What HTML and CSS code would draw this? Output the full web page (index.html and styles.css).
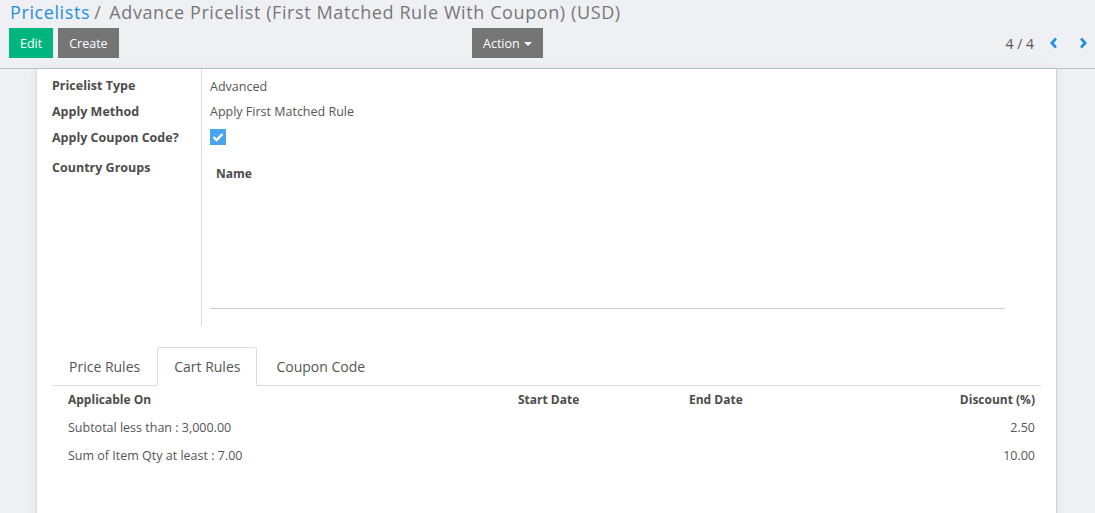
FILE: index.html
```html
<!DOCTYPE html>
<html>
<head>
<meta charset="utf-8">
<link rel="stylesheet" href="styles.css">
</head>
<body>
<div class="cp">
  <div class="crumbs"><a class="crumb-link">Pricelists</a><span class="sep">/</span><span class="crumb-title">Advance Pricelist (First Matched Rule With Coupon) (USD)</span></div>
  <div class="cp-bar">
    <div class="cp-left">
      <button class="btn btn-primary">Edit</button>
      <button class="btn btn-secondary">Create</button>
    </div>
    <div class="cp-mid">
      <button class="btn btn-secondary btn-action">Action <span class="caret"></span></button>
    </div>
    <div class="pager">
      <span class="pager-value">4 / 4</span>
      <span class="pager-btn"><svg width="10" height="12" viewBox="0 0 10 12"><path d="M7 1.5 L2.8 6 L7 10.5" fill="none" stroke="#1f8fe0" stroke-width="2.6"/></svg></span>
      <span class="pager-btn"><svg width="10" height="12" viewBox="0 0 10 12"><path d="M3 1.5 L7.2 6 L3 10.5" fill="none" stroke="#1f8fe0" stroke-width="2.6"/></svg></span>
    </div>
  </div>
</div>
<div class="content">
  <div class="sheet">
    <div class="group">
      <div class="lbl">Pricelist Type</div>
      <div class="val">Advanced</div>
      <div class="lbl">Apply Method</div>
      <div class="val">Apply First Matched Rule</div>
      <div class="lbl">Apply Coupon Code?</div>
      <div class="val"><span class="checkbox"><svg width="12" height="10" viewBox="0 0 12 10"><path d="M1.5 5 L4.6 8 L10.5 2" fill="none" stroke="#fff" stroke-width="2.4"/></svg></span></div>
      <div class="lbl lbl-last">Country Groups</div>
      <div class="val val-last">
        <div class="subtable">
          <div class="subhead">Name</div>
        </div>
      </div>
    </div>
    <div class="tabs">
      <div class="tab">Price Rules</div>
      <div class="tab active">Cart Rules</div>
      <div class="tab">Coupon Code</div>
    </div>
    <table class="rules">
      <thead>
        <tr><th class="c1">Applicable On</th><th class="c2">Start Date</th><th class="c3">End Date</th><th class="c4">Discount (%)</th></tr>
      </thead>
      <tbody>
        <tr><td class="c1">Subtotal less than : 3,000.00</td><td class="c2"></td><td class="c3"></td><td class="c4">2.50</td></tr>
        <tr><td class="c1">Sum of Item Qty at least : 7.00</td><td class="c2"></td><td class="c3"></td><td class="c4">10.00</td></tr>
      </tbody>
    </table>
  </div>
</div>
</body>
</html>
```
FILE: styles.css
```css
* { box-sizing: border-box; }
html, body { margin: 0; padding: 0; }
body {
  background: #eff0f4;
  font-family: "Open Sans", "Liberation Sans", sans-serif;
  font-size: 12.5px;
  color: #4c4c4c;
  height: 513px;
  overflow: hidden;
}
.cp {
  height: 69px;
  border-bottom: 1px solid #b9c4d0;
  padding: 0 0 0 9px;
}
.crumbs {
  font-size: 18px;
  letter-spacing: 0.6px;
  line-height: 24px;
  padding-left: 1px;
  color: #777;
  white-space: nowrap;
}
.crumb-link { color: #1f8fe0; }
.sep { margin: 0 8px 0 4px; color: #777; }
.crumb-title { color: #777; }
.cp-bar {
  display: flex;
  align-items: center;
  margin-top: 4px;
  height: 30px;
}
.cp-left { display: flex; gap: 5px; width: 463px; }
.cp-mid { flex: 1; }
.btn {
  height: 30px;
  border: none;
  border-radius: 0;
  font-family: "Open Sans", "Liberation Sans", sans-serif;
  font-size: 12.5px;
  color: #fff;
  padding: 0 11px;
  cursor: pointer;
}
.btn-primary { background: #00b57e; }
.btn-secondary { background: #757575; }
.caret {
  display: inline-block;
  width: 0; height: 0;
  border-left: 4px solid transparent;
  border-right: 4px solid transparent;
  border-top: 4px solid #fff;
  vertical-align: middle;
  margin-left: 1px;
}
.pager { display: flex; align-items: center; font-size: 14px; color: #555; }
.pager-value { margin-right: 3px; }
.pager-btn { display: flex; width: 24px; margin-left: 5px; justify-content: center; }
.content {
  padding: 0 38px 0 36px;
}
.sheet {
  background: #fff;
  border-left: 1px solid #d9dae0;
  border-right: 1px solid #d0d1d8;
  box-shadow: 0 0 10px rgba(0,0,0,0.06);
  padding: 0 15px 40px 15px;
  min-height: 460px;
}
.group {
  display: grid;
  grid-template-columns: 150px 1fr;
  margin-right: 36px;
}
.lbl {
  font-weight: bold;
  color: #4c4c4c;
  line-height: 26px;
  border-right: 1px solid #dcdcdc;
}
.lbl:first-child { padding-top: 4px; }
.val {
  padding-left: 8px;
  line-height: 26px;
  color: #555;
}
.group .val:nth-child(2) { padding-top: 5px; line-height: 25px; }
.checkbox {
  display: inline-flex;
  width: 16px; height: 16px;
  background: #4aa5ef;
  align-items: center;
  justify-content: center;
  vertical-align: middle;
  margin-top: -4px;
}
.lbl-last { padding-top: 4px; height: 175px; }
.val-last { padding-top: 10px; }
.subtable {
  height: 148px;
  border-bottom: 1px solid #cfcfcf;
}
.subhead {
  font-weight: bold;
  font-size: 12px;
  color: #4c4c4c;
  padding-left: 6px;
  line-height: 26px;
}
.tabs {
  display: flex;
  margin-top: 21px;
  border-bottom: 1px solid #dcdcdc;
  height: 39px;
}
.tab {
  font-size: 14px;
  color: #555;
  padding: 0 16px;
  line-height: 37px;
  border: 1px solid transparent;
  border-radius: 3px 3px 0 0;
  margin-bottom: -1px;
}
.tab.active {
  border-color: #dcdcdc;
  border-bottom-color: #fff;
  background: #fff;
}
.tab:last-child { padding-left: 18px; }
.rules {
  width: 100%;
  border-collapse: collapse;
}
.rules th {
  font-size: 12px;
  font-weight: bold;
  color: #4c4c4c;
  height: 27px;
  text-align: left;
  padding: 0 6px;
  vertical-align: middle;
}
.rules td {
  height: 28px;
  padding: 0 6px;
  color: #555;
}
.rules .c1 { width: 460px; padding-left: 16px; }
.rules .c2 { width: 171px; }
.rules .c4 { text-align: right; }
```
